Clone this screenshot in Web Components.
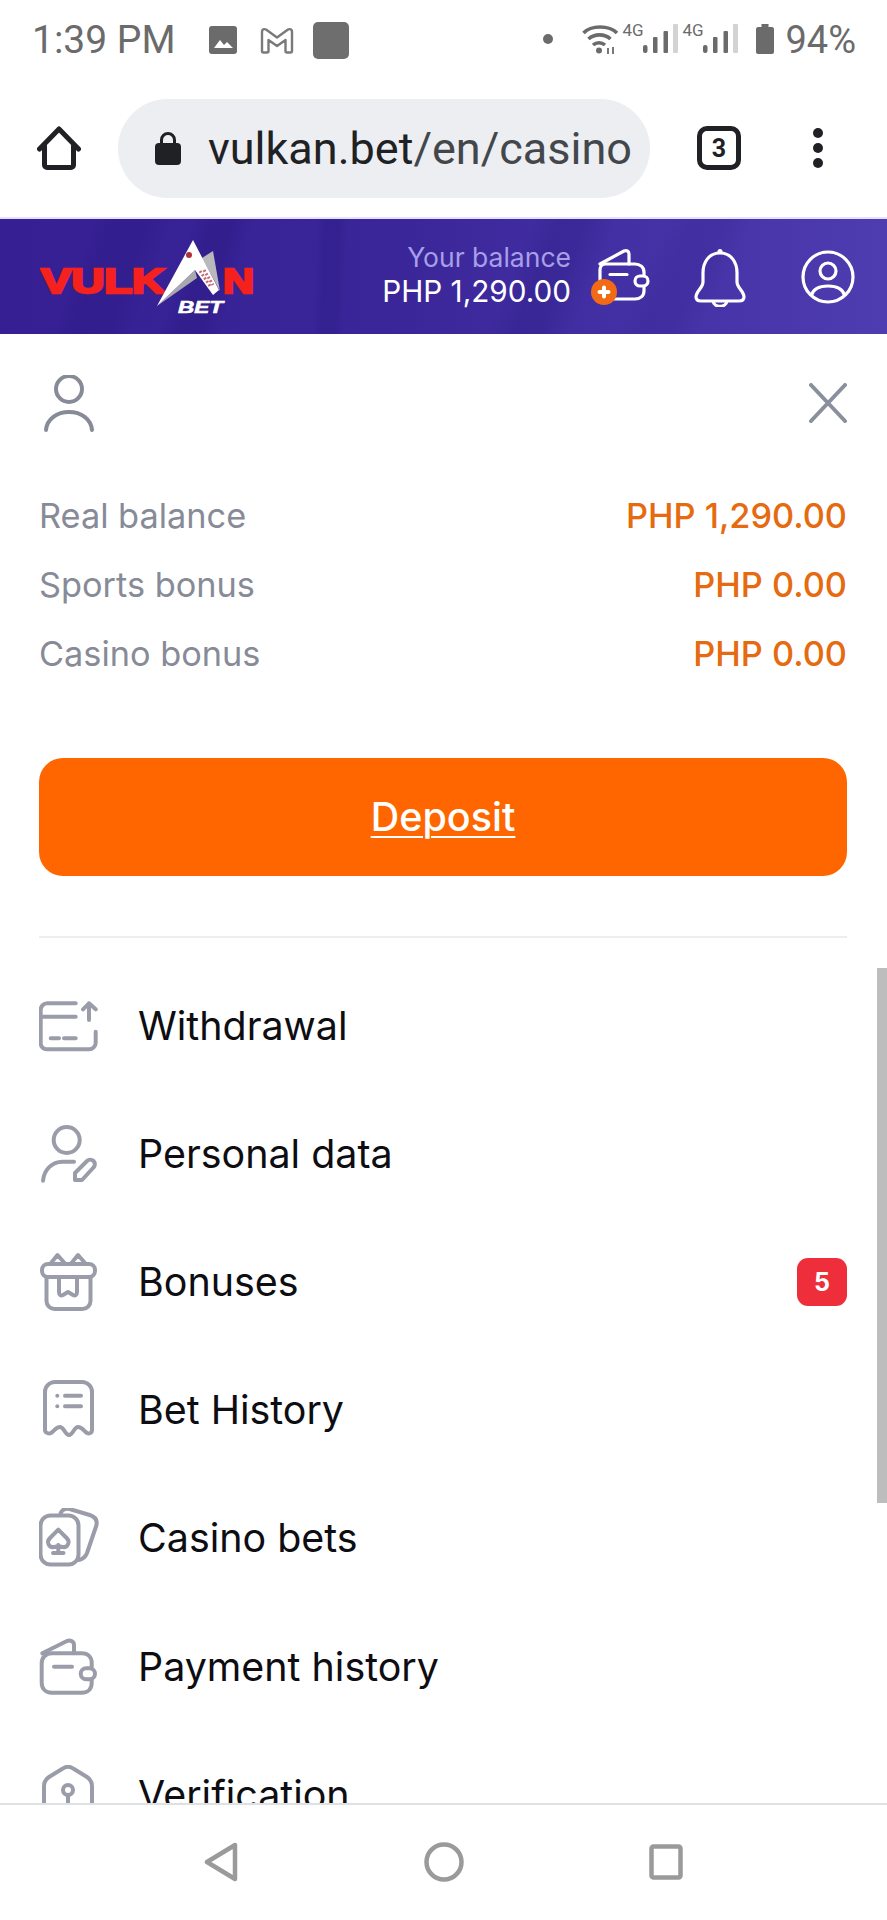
<!DOCTYPE html>
<html>
<head>
<meta charset="utf-8">
<title>Vulkan Bet</title>
<style>
    html, body { margin: 0; height: 100%; background: #fff; }
    body { display: flex; flex-direction: column; height: 1920px; overflow: hidden; font-family: "Inter", "Liberation Sans", sans-serif; }
</style>
</head>
<body>
<status-bar></status-bar>
<browser-toolbar url="vulkan.bet" path="/en/casino" tabs="3"></browser-toolbar>
<site-header></site-header>
<account-panel>
    <balance-row label="Real balance" value="PHP 1,290.00"></balance-row>
    <balance-row label="Sports bonus" value="PHP 0.00"></balance-row>
    <balance-row label="Casino bonus" value="PHP 0.00"></balance-row>
    <menu-row slot="menu" icon="withdrawal">Withdrawal</menu-row>
    <menu-row slot="menu" icon="person">Personal data</menu-row>
    <menu-row slot="menu" icon="gift" badge="5">Bonuses</menu-row>
    <menu-row slot="menu" icon="receipt">Bet History</menu-row>
    <menu-row slot="menu" icon="cards">Casino bets</menu-row>
    <menu-row slot="menu" icon="wallet">Payment history</menu-row>
    <menu-row slot="menu" icon="shield">Verification</menu-row>
</account-panel>
<nav-bar></nav-bar>

<script>
class StatusBar extends HTMLElement {
    constructor() {
        super();
        this.attachShadow({ mode: 'open' });
        const bars = `
            <svg class="bars" width="35" height="29" viewBox="0 0 35 29" fill="#6b6b6b">
                <rect x="0" y="21" width="4.500" height="8" rx="2"/>
                <rect x="10" y="13" width="4.500" height="16" rx="1"/>
                <rect x="20.500" y="7" width="4.500" height="22" rx="1"/>
                <rect x="30" y="0" width="5" height="29" rx="1" fill="#d3d3d3"/>
            </svg>`;
        this.shadowRoot.innerHTML = `
            <style>
                :host { display: flex; justify-content: space-between; height: 40px; padding: 20px 31px 12px 32px; color: #6b6b6b; font-family: "Roboto", "Liberation Sans", sans-serif; flex: none; }
                .left { display: flex; align-items: center; }
                .right { display: flex; align-items: flex-start; }
                .time { font-size: 39px; line-height: 40px; margin-right: 33px; }
                .g { font-size: 17px; line-height: 14px; width: 19px; margin-top: 3px; white-space: nowrap; }
                .g + .bars { margin-left: 2px; margin-top: 4px; }
                .pct { font-size: 38px; line-height: 40px; margin-left: 11px; }
                svg { display: block; flex: none; }
            </style>
            <div class="left">
                <span class="time">1:39 PM</span>
                <svg width="28" height="28" viewBox="0 0 28 28" style="margin-right:23px">
                    <rect width="28" height="28" rx="3" fill="#6b6b6b"/>
                    <path d="M5 22l6-8 4 5 3-3 6 6z" fill="#fff"/>
                </svg>
                <svg width="34" height="27" viewBox="0 0 34 27" fill="none" stroke="#7a7a7a" stroke-width="2.400" stroke-linejoin="round" style="margin-right:19px">
                    <path d="M2 4.500c0-2 2-3 4-2l11 8 11-8c2-1 4 0 4 2V24c0 1-.5 1.500-1.500 1.500H27c-1 0-1.500-.5-1.500-1.500V13L17 19 8.500 13v11c0 1-.5 1.500-1.500 1.500H3.500C2.500 25.500 2 25 2 24z"/>
                </svg>
                <svg width="36" height="37" viewBox="0 0 36 37"><rect width="36" height="37" rx="5" fill="#6e6e6e"/></svg>
            </div>
            <div class="right">
                <svg width="10" height="10" viewBox="0 0 10 10" style="margin:14px 29px 0 0"><circle cx="5" cy="5" r="5" fill="#6b6b6b"/></svg>
                <svg width="37" height="32" viewBox="0 0 37 32" fill="none" stroke="#6b6b6b" stroke-width="3.600" style="margin:3px 3px 0 0">
                    <path d="M1.500 10C9 2 27 2 35 10"/>
                    <path d="M6.500 16c6-5.500 16-5.500 22 0"/>
                    <path d="M11 22c3.500-3 8.500-3 12 0"/>
                    <circle cx="17" cy="27.500" r="3" fill="#6b6b6b" stroke="none"/>
                    <path d="M26 31v-6M31 31v-7" stroke-width="1.800"/>
                </svg>
                <span class="g">4G</span>${bars}
                <span class="g" style="margin-left:4px">4G</span>${bars}
                <svg width="18" height="30" viewBox="0 0 18 30" style="margin:4px 0 0 18px">
                    <path d="M5.500 0h7v3H16c1 0 2 1 2 2v23c0 1-1 2-2 2H2c-1 0-2-1-2-2V5c0-1 1-2 2-2h3.500z" fill="#6b6b6b"/>
                </svg>
                <span class="pct">94%</span>
            </div>
        `;
    }
}

class BrowserToolbar extends HTMLElement {
    constructor() {
        super();
        this.attachShadow({ mode: 'open' });
        this.shadowRoot.innerHTML = `
            <style>
                :host { display: flex; align-items: center; height: 138px; padding: 7px 0 0 37px; flex: none; font-family: "Roboto", "Liberation Sans", sans-serif; }
                svg { display: block; flex: none; }
                .pill { display: flex; align-items: center; gap: 27px; width: 495px; height: 99px; margin-left: 37px; padding-left: 37px; border-radius: 50px; background: #eceef1; font-size: 45px; white-space: nowrap; overflow: hidden; }
                .url { color: #202124; }
                .path { color: #43474b; }
                .tab { display: flex; align-items: center; justify-content: center; box-sizing: border-box; width: 44px; height: 44px; margin-left: 47px; border: 5px solid #202124; border-radius: 10px; color: #202124; font: bold 25px "Roboto", sans-serif; }
            </style>
            <svg width="44" height="44" viewBox="0 0 44 44" fill="none" stroke="#202124" stroke-width="5" stroke-linejoin="round" stroke-linecap="round">
                <path d="M2.500 23L22 3l19.500 20"/>
                <path d="M7.500 20v19a2.500 2.500 0 0 0 2.500 2.500h24a2.500 2.500 0 0 0 2.500-2.500V20"/>
            </svg>
            <div class="pill">
                <svg width="26" height="34" viewBox="0 0 26 34">
                    <path d="M6.500 14V9a6.500 6.500 0 0 1 13 0v5" fill="none" stroke="#202124" stroke-width="3"/>
                    <rect y="12" width="26" height="22" rx="4" fill="#202124"/>
                </svg>
                <span><span class="url">${this.getAttribute('url')}</span><span class="path">${this.getAttribute('path')}</span></span>
            </div>
            <div class="tab">${this.getAttribute('tabs')}</div>
            <svg width="10" height="40" viewBox="0 0 10 40" fill="#202124" style="margin-left:72px">
                <circle cx="5" cy="5" r="5"/><circle cx="5" cy="20" r="5"/><circle cx="5" cy="35" r="5"/>
            </svg>
        `;
    }
}

class SiteHeader extends HTMLElement {
    constructor() {
        super();
        this.attachShadow({ mode: 'open' });
        this.shadowRoot.innerHTML = `
            <style>
                :host { display: flex; align-items: center; height: 115px; flex: none; box-sizing: content-box; border-top: 2px solid #e6e0fa; padding: 0 29px 0 40px; color: #fff;
                    background:
                        linear-gradient(110deg, transparent 10%, rgba(28,14,105,.16) 12.500% 16%, transparent 18.500%),
                        linear-gradient(106deg, transparent 21%, rgba(28,14,105,.2) 23% 25.500%, transparent 27.500%),
                        linear-gradient(92deg, transparent 35.500%, rgba(28,14,105,.16) 36.500% 38%, transparent 39%),
                        linear-gradient(112deg, transparent 57%, rgba(28,14,105,.16) 60% 63%, transparent 66%),
                        linear-gradient(116deg, transparent 71%, rgba(28,14,105,.1) 74% 77%, transparent 80%),
                        linear-gradient(90deg, #351f93, #3a2699 45%, #4e3cb1);
                }
                svg { display: block; flex: none; }
                .logo { margin-top: -2px; }
                .balance { display: flex; flex-direction: column; align-items: flex-end; margin: 0 19px 6px auto; }
                .caption { font-size: 26.500px; line-height: 34px; color: #a89fe9; }
                .amount { font-size: 29.700px; line-height: 34px; }
                .icons { display: flex; gap: 40px; }
                .icons svg:last-child { margin-left: 8px; }
            </style>
            <svg class="logo" width="215" height="117" viewBox="40 217 215 117">
                <text x="41" y="292.500" textLength="124" lengthAdjust="spacingAndGlyphs" font-family="Liberation Sans" font-weight="700" font-size="35" fill="#f5211f" stroke="#f5211f" stroke-width="2.500">VULK</text>
                <text x="223" y="292.500" textLength="31" lengthAdjust="spacingAndGlyphs" font-family="Liberation Sans" font-weight="700" font-size="35" fill="#f5211f" stroke="#f5211f" stroke-width="2.500">N</text>
                <polygon points="213,251 220,291 202,258" fill="#b9b9bd"/>
                <polygon points="157,306 195,270 197,278" fill="#a9a9ad"/>
                <polygon points="193,240 157,306 195,270 213,295 219,290" fill="#fff"/>
                <circle cx="189" cy="255" r="3" fill="#b23038"/>
                <path d="M200 271l10 15M204 270l9 15" stroke="#c96a72" stroke-width="3" stroke-dasharray="2 2"/>
                <text x="178" y="313" textLength="45" lengthAdjust="spacingAndGlyphs" font-family="Liberation Sans" font-weight="700" font-style="italic" font-size="17" fill="#fff" stroke="#fff" stroke-width=".6">BET</text>
            </svg>
            <div class="balance">
                <span class="caption">Your balance</span>
                <span class="amount">PHP 1,290.00</span>
            </div>
            <div class="icons">
                <svg width="60" height="60" viewBox="0 0 60 60" fill="none" stroke="#fff" stroke-width="3.200" stroke-linejoin="round" stroke-linecap="round">
                    <path d="M10 17L34 4c2.500-1 5 0 5 3v10"/>
                    <path d="M10 44V23c0-4 3-6 6-6h29c5 0 9 3 9 8v3M54 40v4c0 5-4 8-9 8H18"/>
                    <path d="M20 27.500h17"/>
                    <rect x="45" y="29" width="13" height="10" rx="5"/>
                    <circle cx="14" cy="45" r="13" fill="#f26a16" stroke="none"/>
                    <path d="M14 40.500v9M9.500 45h9" stroke-width="4"/>
                </svg>
                <svg width="60" height="60" viewBox="0 0 60 60" fill="none" stroke="#fff" stroke-width="3.200" stroke-linejoin="round">
                    <circle cx="30" cy="4.500" r="2.500" fill="#fff" stroke="none"/>
                    <path d="M30 6c-11 0-17 9-17 20v9c0 6-7 9-7 15 0 3 2 4 5 4h38c3 0 5-1 5-4 0-6-7-9-7-15v-9C47 15 41 6 30 6z"/>
                    <path d="M23 54c1 7 13 7 14 0"/>
                </svg>
                <svg width="60" height="60" viewBox="0 0 60 60" fill="none" stroke="#fff" stroke-width="3.200">
                    <circle cx="30" cy="30" r="25"/>
                    <circle cx="30" cy="24" r="8"/>
                    <path d="M13 49c2-7 9-10 17-10s15 3 17 10"/>
                </svg>
            </div>
        `;
    }
}

class BalanceRow extends HTMLElement {
    constructor() {
        super();
        this.attachShadow({ mode: 'open' });
        this.shadowRoot.innerHTML = `
            <style>
                :host { display: flex; justify-content: space-between; align-items: center; height: 69px; font-size: 34.300px; }
                .label { color: #878b98; }
                .value { color: #e56a10; font-weight: 500; }
            </style>
            <span class="label">${this.getAttribute('label')}</span>
            <span class="value">${this.getAttribute('value')}</span>
        `;
    }
}

const MENU_ICONS = {
    withdrawal: `<path d="M36.700 7.300H8.300A6.600 6.600 0 0 0 1.700 14v33.300a6 6 0 0 0 6.600 6H50a6.700 6.700 0 0 0 6.700-6.600V35.700"/>
        <path d="M1.700 20.700h35M11.700 42.300H20M25 42.300h11.700M50 24V7.300M44 13.300l6-6 6.700 6"/>`,
    person: `<circle cx="27.700" cy="16" r="13"/>
        <path d="M4 56.700C5 46 13 37.700 23.300 37.700H35"/>
        <path d="M36 56v-7L48 37a4.500 4.500 0 0 1 6.500 6.500L43 56z"/>`,
    gift: `<rect x="3" y="12" width="53" height="13" rx="6"/>
        <path d="M12 11l6.500-8 7 8M32.500 11l6.500-8 7 8"/>
        <path d="M7.500 25v24a8 8 0 0 0 8 8h28a8 8 0 0 0 8-8V25"/>
        <path d="M20 25v15c0 3 2 4 4 3l5-3 5 3c2 1 4 0 4-3V25"/>`,
    receipt: `<path d="M6 12a10 10 0 0 1 10-10h27a10 10 0 0 1 10 10v38c0 3-3 4-5 3-3-2-5-6-9-6s-5 8-9 8-5-8-9-8-6 4-9 6c-2 1-6 0-6-3z"/>
        <path d="M26 15.700h16M26 26.300h16"/>
        <circle cx="18.300" cy="15.700" r="2" fill="#9a9da9" stroke="none"/>
        <circle cx="18.300" cy="26.300" r="2" fill="#9a9da9" stroke="none"/>`,
    cards: `<rect x="1.500" y="7.500" width="38" height="49" rx="10"/>
        <path d="M21.700 5c2-4 5-5 9-4l20 6c6 2 8 6 6.500 11L48 45c-1.500 4-4 6-8 7"/>
        <path d="M19.300 21.700L11 30c-4 4-1 10 4 9 2 0 4-1 4.300-2 .3 1 2.300 2 4.300 2 5 1 8-5 4-9zM19.300 37v7M14 45h10.500"/>`,
    wallet: `<path d="M3.300 16.300L28 4c3-1 7 0 7 4v8.300"/>
        <path d="M52.700 30v-4c0-6-4-9.700-9.700-9.700H13c-6 0-10.300 4-10.300 10V45.700c0 6 4 10 10 10H43c6 0 9.700-4 9.700-10v-3"/>
        <path d="M15 29.700h18"/>
        <rect x="41.700" y="31.300" width="14.300" height="11" rx="5.500"/>`,
    shield: `<path d="M5 62V21c0-5 2-7 5-9L23 4c4-3 8-3 12 0l13 8c3 2 5 4 5 9v41"/>
        <circle cx="29" cy="25" r="5"/><path d="M29 30v8"/>`
};

class MenuRow extends HTMLElement {
    constructor() {
        super();
        this.attachShadow({ mode: 'open' });
        const badge = this.getAttribute('badge');
        this.shadowRoot.innerHTML = `
            <style>
                :host { display: flex; align-items: center; gap: 39px; height: 128.100px; font-size: 39.400px; color: #0d0d12; }
                svg { display: block; flex: none; }
                .text { flex: 1; }
                .badge { display: flex; align-items: center; justify-content: center; width: 50px; height: 48px; border-radius: 11px; background: #ee2f3b; color: #fff; font-size: 25px; font-weight: 700; }
            </style>
            <svg width="60" height="60" viewBox="0 0 60 60" fill="none" stroke="#9a9da9" stroke-width="4" stroke-linecap="round" stroke-linejoin="round">${MENU_ICONS[this.getAttribute('icon')]}</svg>
            <span class="text"><slot></slot></span>
            ${badge ? `<span class="badge">${badge}</span>` : ''}
        `;
    }
}

class AccountPanel extends HTMLElement {
    constructor() {
        super();
        this.attachShadow({ mode: 'open' });
        this.shadowRoot.innerHTML = `
            <style>
                :host { display: block; position: relative; flex: 1; min-height: 0; overflow: hidden; background: #fff; }
                .inner { padding: 0 40px 0 39px; }
                .user { display: flex; justify-content: space-between; align-items: flex-start; padding-top: 40px; height: 107px; box-sizing: content-box; }
                svg { display: block; flex: none; }
                .deposit { display: flex; align-items: center; justify-content: center; height: 118px; margin-top: 70px; border-radius: 24px; background: #ff6600; color: #fff; font-size: 39.500px; font-weight: 500; text-decoration: underline; text-underline-offset: 5px; text-decoration-thickness: 2px; }
                .divider { height: 2px; margin: 60px 0 24px; background: #eceef1; }
                .scroll { position: absolute; right: 0; top: 634px; width: 10px; height: 535px; background: #bdbdbd; }
            </style>
            <div class="inner">
                <div class="user">
                    <svg width="60" height="60" viewBox="0 0 60 60" fill="none" stroke="#878b98" stroke-width="4" stroke-linecap="round" style="margin-top:1px">
                        <circle cx="30" cy="14" r="13"/>
                        <path d="M7 55c1-11 11-18 23-18s22 7 23 18"/>
                    </svg>
                    <svg width="38" height="40" viewBox="0 0 38 40" fill="none" stroke="#8a8f9e" stroke-width="4" stroke-linecap="round" style="margin-top:9px">
                        <path d="M2 2l34 36M36 2L2 38"/>
                    </svg>
                </div>
                <slot></slot>
                <div class="deposit">Deposit</div>
                <div class="divider"></div>
                <slot name="menu"></slot>
            </div>
            <div class="scroll"></div>
        `;
    }
}

class NavBar extends HTMLElement {
    constructor() {
        super();
        this.attachShadow({ mode: 'open' });
        this.shadowRoot.innerHTML = `
            <style>
                :host { display: block; height: 115px; flex: none; border-top: 2px solid #dfe0e3; background: #fff; position: relative; z-index: 1; }
                .keys { display: flex; justify-content: center; height: 113px; padding-left: 1px; align-items: center; }
                .keys span { display: flex; justify-content: center; width: 222px; }
                svg { display: block; }
            </style>
            <div class="keys">
                <span><svg width="34" height="40" viewBox="0 0 34 40" fill="none" stroke="#9a9a9a" stroke-width="4.500" stroke-linejoin="round" style="margin-left:-2px"><path d="M31 3v34L3 20z"/></svg></span>
                <span><svg width="40" height="40" viewBox="0 0 40 40" fill="none" stroke="#9a9a9a" stroke-width="4.500"><circle cx="20" cy="20" r="17.500"/></svg></span>
                <span><svg width="34" height="36" viewBox="0 0 34 36" fill="none" stroke="#9a9a9a" stroke-width="4.500" stroke-linejoin="round"><rect x="2.500" y="2.500" width="29" height="31" rx="2"/></svg></span>
            </div>
        `;
    }
}

customElements.define('status-bar', StatusBar);
customElements.define('browser-toolbar', BrowserToolbar);
customElements.define('site-header', SiteHeader);
customElements.define('balance-row', BalanceRow);
customElements.define('menu-row', MenuRow);
customElements.define('account-panel', AccountPanel);
customElements.define('nav-bar', NavBar);
</script>
</body>
</html>
